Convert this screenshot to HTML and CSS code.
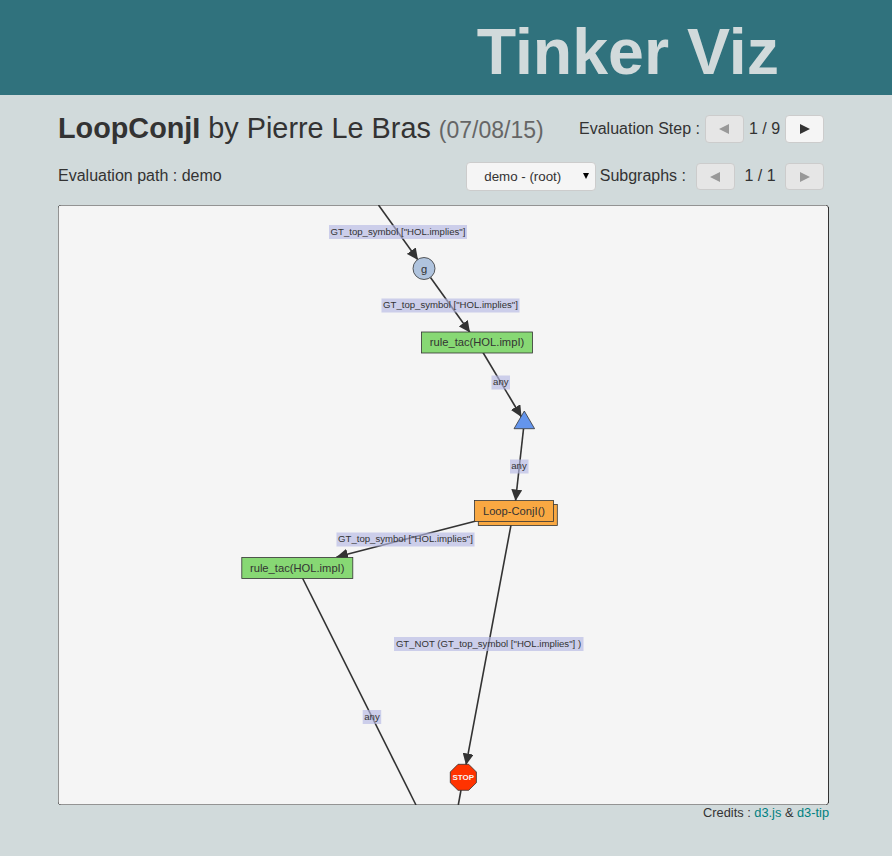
FILE: index.html
```html
<!DOCTYPE html>
<html lang="en">
<head>
<meta charset="utf-8">
<title>Tinker Viz</title>
<link rel="stylesheet" href="styles.css">
</head>
<body>
<header class="banner"><h1>Tinker Viz</h1></header>
<main class="content">
  <div class="row title-row">
    <h2><strong>LoopConjI</strong> by Pierre Le Bras <small>(07/08/15)</small></h2>
    <div class="controls">
      <span class="step-label">Evaluation Step :</span>
      <button class="btn prev" disabled><svg width="10" height="10"><path d="M10 0V10L0 5Z"/></svg></button>
      <span class="count">1 / 9</span>
      <button class="btn next"><svg width="10" height="10"><path d="M0 0V10L10 5Z"/></svg></button>
    </div>
  </div>
  <div class="row path-row">
    <span class="path">Evaluation path : demo</span>
    <div class="controls">
      <button class="picker"><span>demo - (root)</span><svg width="6" height="6"><path d="M0 0H6L3 6Z"/></svg></button>
      <span class="sub-label">Subgraphs :</span>
      <button class="btn prev" disabled><svg width="10" height="10"><path d="M10 0V10L0 5Z"/></svg></button>
      <span class="count wide">1 / 1</span>
      <button class="btn next" disabled><svg width="10" height="10"><path d="M0 0V10L10 5Z"/></svg></button>
    </div>
  </div>
  <svg class="graph" width="771" height="600" viewBox="58 205 771 600">
    <defs>
      <marker id="arrow" viewBox="0 0 10 10" refX="10" refY="5" markerWidth="11.500" markerHeight="11" preserveAspectRatio="none" markerUnits="userSpaceOnUse" orient="auto"><path d="M0 0L10 5L0 10Z"/></marker>
    </defs>
    <rect class="canvas" x="58" y="205" width="771" height="600"/>
    <g class="edges">
      <path d="M378.500 205L418 260"/>
      <path d="M430.500 277.500L470 332.500"/>
      <path d="M483 352.500L521.500 417"/>
      <path d="M523.500 429L515.500 501"/>
      <path d="M476 521L336.500 557"/>
      <path d="M511 525L466 765"/>
      <path class="plain" d="M302.500 578L416 805"/>
      <path class="plain" d="M461 790L458.300 805"/>
    </g>
    <g class="labels">
      <rect x="329" y="225" width="138" height="14"/><text x="398" y="235">GT_top_symbol ["HOL.implies"]</text>
      <rect x="381.500" y="298.500" width="138" height="14"/><text x="450.500" y="308">GT_top_symbol ["HOL.implies"]</text>
      <rect x="491.500" y="375.500" width="18.500" height="14"/><text x="500.800" y="385">any</text>
      <rect x="510" y="459.500" width="18.500" height="14"/><text x="519" y="469">any</text>
      <rect x="336.500" y="532.500" width="138" height="14"/><text x="405.500" y="542">GT_top_symbol ["HOL.implies"]</text>
      <rect x="394" y="637" width="189.500" height="14"/><text x="488.500" y="647">GT_NOT (GT_top_symbol ["HOL.implies"] )</text>
      <rect x="362.700" y="710" width="18.500" height="14"/><text x="372" y="720">any</text>
    </g>
    <g class="nodes">
      <circle class="goal" cx="424" cy="268.500" r="11"/><text x="424" y="273">g</text>
      <rect class="atomic" x="421.500" y="332" width="111" height="21"/><text x="477" y="346">rule_tac(HOL.impI)</text>
      <path class="identity" d="M524.300 411L534.600 428.700H514Z"/>
      <rect class="nested" x="478.300" y="504.500" width="79" height="21"/>
      <rect class="nested" x="474.500" y="500.500" width="79" height="21"/><text x="514" y="515">Loop-ConjI()</text>
      <rect class="atomic" x="241.800" y="557.500" width="111" height="21"/><text x="297.200" y="572">rule_tac(HOL.impI)</text>
      <path class="breakpoint" d="M458 764.300H468.700L476.400 772V782.700L468.700 790.300H458L450.300 782.700V772Z"/><text class="stop" x="463.300" y="780">STOP</text>
    </g>
    <rect class="frame" x="58" y="205" width="770.500" height="600" rx="3"/>
    <path class="frame-side" d="M828.500 207V803"/>
  </svg>
  <footer>Credits : <a href="#">d3.js</a> &amp; <a href="#">d3-tip</a></footer>
</main>
</body>
</html>
```
FILE: styles.css
```css
* { box-sizing: border-box; }
body {
  margin: 0;
  background: #d1dadb;
  color: #333;
  font: 16px "Liberation Sans", Arial, sans-serif;
}
.banner {
  height: 95px;
  padding: 16px 113px 0 0;
  background: #30727d;
  text-align: right;
}
h1 { margin: 0; color: #d1dadb; font-size: 64.5px; line-height: 73px; }
.content { width: 771px; margin-left: 58px; }
.row { display: flex; justify-content: space-between; padding-right: 5px; }
.title-row { height: 62px; padding-top: 17px; }
.path-row { height: 48px; padding-top: 5px; }
h2 { margin: 0; font-size: 28.8px; font-weight: 400; line-height: 33px; white-space: nowrap; }
h2 small { color: #666; font-size: 23px; }
.controls { display: flex; align-items: flex-start; line-height: 18px; white-space: nowrap; }
.title-row .controls { padding-top: 3px; }
.step-label { margin: 5px 5px 0 0; }
.path { margin-top: 5px; line-height: 18px; }
.sub-label { margin: 5px 10px 0 4px; }
.count { width: 41px; margin-top: 5px; text-align: center; }
.count.wide { width: 50px; }
.btn, .picker {
  display: flex;
  align-items: center;
  height: 28px;
  padding: 0;
  border: 1px solid #ccc;
  border-radius: 4px;
  background: #f5f5f5;
  color: #333;
}
.btn { width: 39px; justify-content: center; }
.path-row .btn { height: 27px; margin-top: 1px; }
.btn svg { fill: #333; }
.btn:disabled { background: #e6e6e6; }
.btn:disabled svg { fill: #999; }
.prev svg { margin-left: -1px; }
.picker {
  width: 130px;
  height: 29px;
  justify-content: space-between;
  padding: 0 6px 0 17.500px;
  font: 13.333px "Liberation Sans", Arial, sans-serif;
}
.picker svg { fill: #000; margin-top: -2px; }
.graph { display: block; border-radius: 3px; }
.graph text { fill: #333; font-size: 11.2px; text-anchor: middle; }
.canvas { fill: #f5f5f5; }
.frame { fill: none; stroke: #333; stroke-width: 1px; }
.frame-side { stroke: #333; stroke-width: 1px; }
.edges path { stroke: #333; stroke-width: 1.6px; marker-end: url(#arrow); }
.edges .plain { marker-end: none; }
#arrow path { fill: #333; stroke: none; }
.labels rect { fill: #b5b9e4; fill-opacity: .65; }
.graph .labels text { font-size: 9.6px; }
.nodes rect, .nodes circle, .nodes path { stroke: #333; stroke-width: .8px; }
.goal { fill: #b0c4de; }
.atomic { fill: #87d874; }
.identity { fill: #6495ed; }
.nested { fill: #f9a842; }
.breakpoint { fill: #ff3300; }
.graph .stop { fill: #f5f5f5; font-size: 8px; font-weight: 700; }
footer { font-size: 12.8px; line-height: 15px; text-align: right; }
footer a { color: #008080; text-decoration: none; }
```
